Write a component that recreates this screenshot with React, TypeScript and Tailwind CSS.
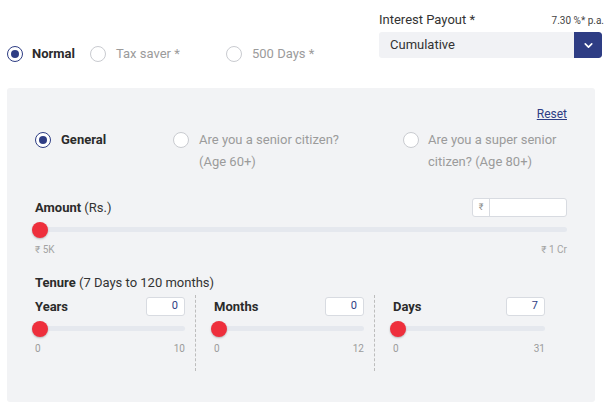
import { ChevronDown } from 'lucide-react';

function Radio({ checked }: { checked?: boolean }) {
    return checked ? (
        <span className="flex h-4 w-4 shrink-0 items-center justify-center rounded-full border-[1.5px] border-[#2e3d84] bg-white">
            <span className="h-2 w-2 rounded-full bg-[#2e3d84]" />
        </span>
    ) : (
        <span className="block h-4 w-4 shrink-0 rounded-full border border-[#c9cbd0] bg-white" />
    );
}

function Track({ className = '' }: { className?: string }) {
    return (
        <div className={`relative h-[5px] rounded-full bg-[#e5e8ee] ${className}`}>
            <span className="absolute left-[-3px] top-1/2 h-4 w-4 -translate-y-1/2 rounded-full bg-[#ee2f3c] shadow-[0_1px_2px_rgba(0,0,0,0.25)]" />
        </div>
    );
}

function TenureCol({ label, value, max, width }: { label: string; value: string; max: string; width: string }) {
    return (
        <div className={`${width} pb-[16px] pt-[2px]`}>
            <div className="flex h-[19px] items-center justify-between">
                <span className="text-[13px] font-bold text-[#2b2b2b]">{label}</span>
                <span className="flex h-[19px] w-[39px] items-center justify-end rounded-[3px] border border-[#d8dbe1] bg-white pr-[6px] text-[11px] text-[#2e3d84]">
                    {value}
                </span>
            </div>
            <Track className="mt-[10px]" />
            <div className="mt-[12px] flex justify-between text-[10px] leading-[12px] text-[#9b9b9b]">
                <span>0</span>
                <span>{max}</span>
            </div>
        </div>
    );
}

export default function App() {
    return (
        <div className="h-[409px] w-[604px] overflow-hidden bg-white font-['Roboto',sans-serif] text-[#2b2b2b]">
            {/* Top: deposit type + payout */}
            <div className="flex items-start pl-[7px] pt-[12px]">
                <div className="mt-[34px] flex h-4 w-[372px] items-center text-[13px] leading-4">
                    <label className="flex w-[83px] items-center gap-[9px]">
                        <Radio checked />
                        <span className="font-bold text-[#2b2b2b]">Normal</span>
                    </label>
                    <label className="flex w-[136px] items-center gap-[10px] text-[#9b9b9b]">
                        <Radio />
                        <span>Tax saver *</span>
                    </label>
                    <label className="flex items-center gap-[10px] text-[#9b9b9b]">
                        <Radio />
                        <span>500 Days *</span>
                    </label>
                </div>
                <div className="w-[223px]">
                    <div className="flex h-[16px] items-center justify-between">
                        <span className="text-[13px] text-[#333]">Interest Payout *</span>
                        <span className="mr-[-2px] text-[10px] text-[#444]">7.30 %* p.a.</span>
                    </div>
                    <div className="mt-[4px] flex h-[26px] overflow-hidden rounded-[3px] bg-[#f1f2f5]">
                        <span className="flex flex-1 items-center pl-[11px] text-[13px] text-[#333]">Cumulative</span>
                        <span className="flex w-[28px] items-center justify-center rounded-r-[3px] bg-[#2e3d84] text-white">
                            <ChevronDown size={13} strokeWidth={3} />
                        </span>
                    </div>
                </div>
            </div>

            {/* Calculator panel */}
            <div className="ml-[7px] mt-[26px] h-[314px] w-[588px] rounded-[3px] bg-[#f2f3f5] px-[28px] pt-[18px]">
                <div className="flex justify-end">
                    <a href="#" className="text-[12px] leading-[16px] text-[#2e3d84] underline">
                        Reset
                    </a>
                </div>

                <div className="mt-[7px] flex items-start text-[13px] leading-[22px]">
                    <label className="flex w-[138px] shrink-0 items-start gap-[10px]">
                        <span className="mt-[3px]">
                            <Radio checked />
                        </span>
                        <span className="font-bold text-[#2b2b2b]">General</span>
                    </label>
                    <label className="flex w-[230px] shrink-0 items-start gap-[10px] text-[#9b9b9b]">
                        <span className="mt-[3px]">
                            <Radio />
                        </span>
                        <span className="w-[150px]">Are you a senior citizen? (Age 60+)</span>
                    </label>
                    <label className="flex shrink-0 items-start gap-[9px] text-[#9b9b9b]">
                        <span className="mt-[3px]">
                            <Radio />
                        </span>
                        <span className="w-[140px]">Are you a super senior citizen? (Age 80+)</span>
                    </label>
                </div>

                {/* Amount */}
                <div className="mt-[25px] flex h-[19px] items-center justify-between text-[13px]">
                    <span>
                        <span className="font-bold">Amount</span> <span className="text-[#333]">(Rs.)</span>
                    </span>
                    <div className="flex h-[19px] w-[95px] overflow-hidden rounded-[3px] border border-[#d8dbe1] bg-white">
                        <span className="flex w-[17px] items-center justify-center border-r border-[#d8dbe1] text-[9px] text-[#888]">
                            ₹
                        </span>
                        <span className="flex-1" />
                    </div>
                </div>
                <Track className="mt-[10px]" />
                <div className="mt-[12px] flex justify-between text-[10px] leading-[12px] text-[#a3a3a3]">
                    <span>₹ 5K</span>
                    <span>₹ 1 Cr</span>
                </div>

                {/* Tenure */}
                <div className="mt-[19px] text-[13px] leading-[16px]">
                    <span className="font-bold">Tenure</span> <span className="text-[#333]">(7 Days to 120 months)</span>
                </div>
                <div className="mt-[4px] flex items-stretch">
                    <TenureCol label="Years" value="0" max="10" width="w-[150px]" />
                    <div className="ml-[10px] mr-[18px] border-l border-dashed border-[#bdbdbd]" />
                    <TenureCol label="Months" value="0" max="12" width="w-[150px]" />
                    <div className="ml-[10px] mr-[18px] border-l border-dashed border-[#bdbdbd]" />
                    <TenureCol label="Days" value="7" max="31" width="w-[152px]" />
                </div>
            </div>
        </div>
    );
}
